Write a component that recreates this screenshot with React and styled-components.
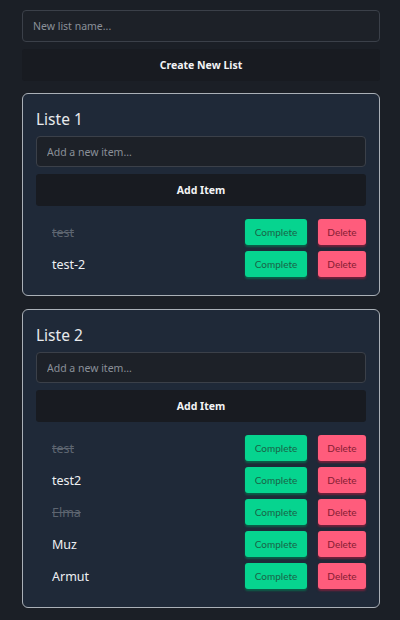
import React from "react";
import styled, { createGlobalStyle } from "styled-components";

const Global = createGlobalStyle`
  html, body { margin: 0; padding: 0; background: #1b1f26; }
  body { font-family: "Noto Sans", "Open Sans", sans-serif; color: #e5e7eb; }
`;

const Page = styled.div`
  display: flex;
  flex-direction: column;
  gap: 7px;
  padding: 10px 20px 13px 22px;
  min-height: 620px;
  box-sizing: border-box;
`;

const TextInput = styled.input`
  box-sizing: border-box;
  width: 100%;
  height: ${(p) => (p.$small ? 31 : 32)}px;
  padding: 0 10px;
  background: #1d2128;
  border: 1px solid #3b4049;
  border-radius: 4px;
  color: #e5e7eb;
  font-family: inherit;
  font-size: 10.5px;
  outline: none;
  &::placeholder { color: #8a9099; }
`;

const WideButton = styled.button`
  box-sizing: border-box;
  width: 100%;
  height: 32px;
  border: none;
  border-radius: 3px;
  background: #181b21;
  color: #f3f4f6;
  font-family: inherit;
  font-weight: 700;
  font-size: 10.5px;
`;

const Lists = styled.div`
  display: flex;
  flex-direction: column;
  gap: 13px;
  margin-top: 5px;
`;

const Card = styled.section`
  box-sizing: border-box;
  border: 1px solid #aab0b7;
  border-radius: 6px;
  background: #1f2938;
  padding: 13px 13px 18px 13px;
  display: flex;
  flex-direction: column;
  gap: 7px;
`;

const Title = styled.h3`
  margin: 0;
  padding-top: 2px;
  font-size: 15.5px;
  font-weight: 400;
  line-height: 20px;
  color: #e8eaed;
`;

const Items = styled.ul`
  list-style: none;
  margin: 6px 0 0 0;
  padding: 0;
  display: flex;
  flex-direction: column;
  gap: 6px;
`;

const Row = styled.li`
  display: flex;
  align-items: center;
  height: 26px;
  padding-left: 16px;
  gap: 11px;
`;

const ItemText = styled.span`
  flex: 1;
  font-size: 12.5px;
  color: ${(p) => (p.$done ? "#5d6570" : "#eef0f2")};
  text-decoration: ${(p) => (p.$done ? "line-through" : "none")};
`;

const SmallButton = styled.button`
  height: 26px;
  width: ${(p) => (p.$kind === "complete" ? 62 : 48)}px;
  border: none;
  border-radius: 3px;
  background: ${(p) => (p.$kind === "complete" ? "#06d48f" : "#ff5c7c")};
  color: ${(p) => (p.$kind === "complete" ? "#1a6347" : "#851c33")};
  box-shadow: 0 1.5px 2px ${(p) => (p.$kind === "complete" ? "rgba(0,120,80,0.7)" : "rgba(150,30,60,0.7)")};
  font-family: "Lato", sans-serif;
  font-size: 10px;
  padding: 0;
`;

const lists = [
  { name: "Liste 1", items: [{ t: "test", d: true }, { t: "test-2" }] },
  {
    name: "Liste 2",
    items: [
      { t: "test", d: true },
      { t: "test2" },
      { t: "Elma", d: true },
      { t: "Muz" },
      { t: "Armut" },
    ],
  },
];

export default function App() {
  return (
    <>
      <Global />
      <Page>
        <TextInput placeholder="New list name..." />
        <WideButton>Create New List</WideButton>
        <Lists>
          {lists.map((l) => (
            <Card key={l.name}>
              <Title>{l.name}</Title>
              <TextInput $small placeholder="Add a new item..." />
              <WideButton>Add Item</WideButton>
              <Items>
                {l.items.map((it, i) => (
                  <Row key={i}>
                    <ItemText $done={it.d}>{it.t}</ItemText>
                    <SmallButton $kind="complete">Complete</SmallButton>
                    <SmallButton $kind="delete">Delete</SmallButton>
                  </Row>
                ))}
              </Items>
            </Card>
          ))}
        </Lists>
      </Page>
    </>
  );
}
